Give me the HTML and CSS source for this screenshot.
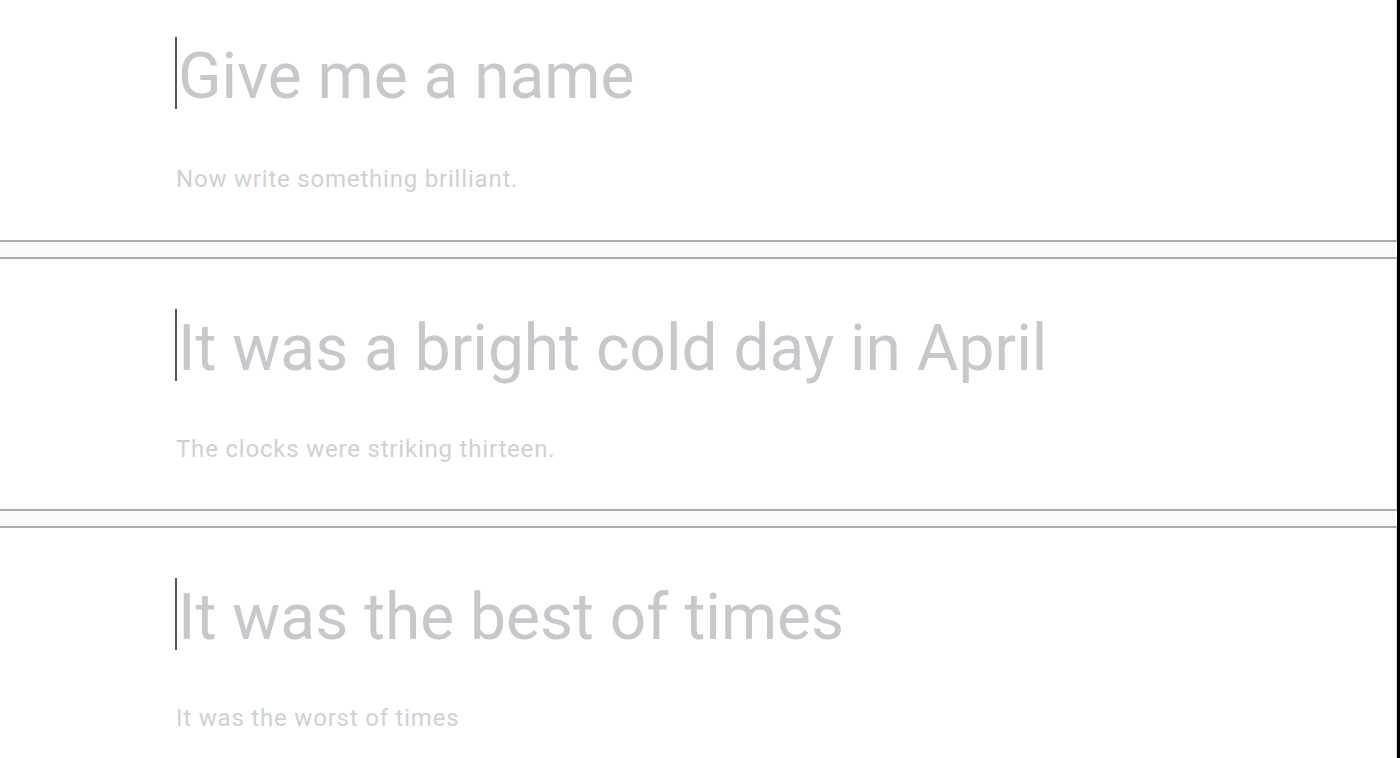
FILE: index.html
```html
<!DOCTYPE html>
<html lang="en">
<head>
    <meta charset="UTF-8">
    <meta name="viewport" content="width=device-width, initial-scale=1.0">
    <title>Drafts</title>
    <link rel="stylesheet" href="styles.css">
</head>
<body>
  <div class="page">
    <section class="draft draft-first">
      <h1 class="draft-title"><span class="caret"></span>Give me a name</h1>
      <p class="draft-body">Now write something brilliant.</p>
    </section>

    <section class="draft">
      <h1 class="draft-title"><span class="caret"></span>It was a bright cold day in April</h1>
      <p class="draft-body">The clocks were striking thirteen.</p>
    </section>

    <section class="draft draft-last">
      <h1 class="draft-title"><span class="caret"></span>It was the best of times</h1>
      <p class="draft-body">It was the worst of times</p>
    </section>
  </div>
</body>
</html>
```

FILE: styles.css
```css
/* General */
html, body {
    height: 100%;
}

body {
    margin: 0;
    padding: 0;
    background-color: #000;
    font-family: 'Roboto', 'Liberation Sans', sans-serif;
    overflow: hidden;
}

.page {
    height: 100%;
    margin-right: 3px;
    background-color: #fafafa;
}

/* Each draft card */
.draft {
    box-sizing: border-box;
    height: 254px;
    margin-bottom: 15px;
    padding: 50px 0 0 175px;
    background-color: #fff;
    border-top: 2px solid #ababab;
    border-bottom: 2px solid #ababab;
    border-right: 1px solid #d4d4d4;
}

.draft-first {
    margin-top: -12px;
    padding-top: 47px;
}

.draft-last {
    height: auto;
    min-height: 300px;
    border-bottom: none;
    margin-bottom: 0;
}

.draft-title {
    margin: 0;
    font-size: 64px;
    font-weight: 400;
    line-height: 76px;
    color: #c6c8cc;
    white-space: nowrap;
}

.caret {
    display: inline-block;
    width: 2px;
    height: 72px;
    margin-right: 1px;
    vertical-align: -11px;
    background-color: #555;
}

.draft-body {
    margin: 47px 0 0 1px;
    font-size: 24px;
    line-height: 30px;
    letter-spacing: 0.8px;
    color: #cfd1d4;
}

.draft-first .draft-body {
    margin-top: 49px;
}
```
